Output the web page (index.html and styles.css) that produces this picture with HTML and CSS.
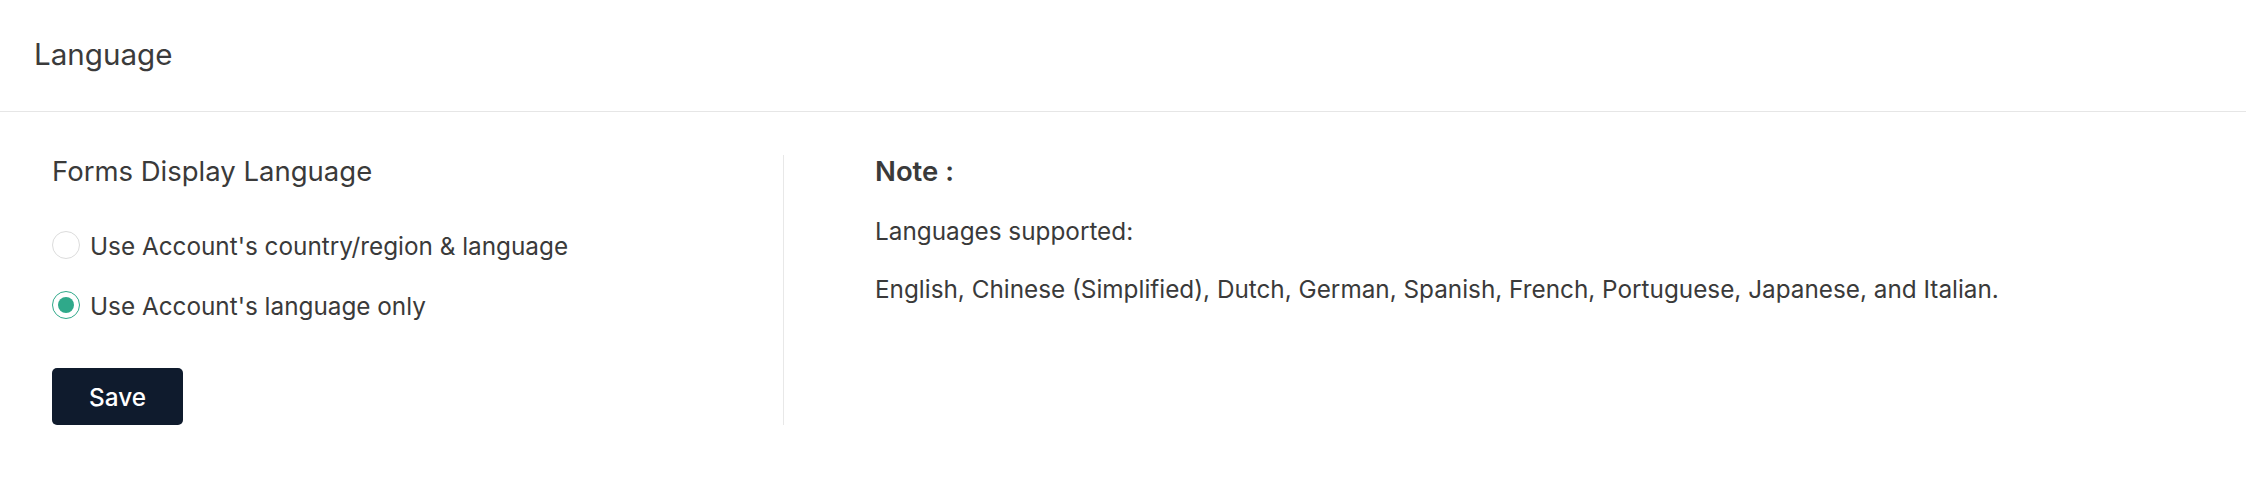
FILE: index.html
```html
<!DOCTYPE html>
<html lang="en">
<head>
<meta charset="utf-8">
<title>Language</title>
<link rel="stylesheet" href="styles.css">
</head>
<body>
<header class="page-header">
  <h1 class="page-title">Language</h1>
</header>
<main class="content">
  <section class="settings">
    <h2 class="section-title">Forms Display Language</h2>
    <div class="radio-group">
      <label class="radio">
        <input type="radio" name="lang" class="radio-input">
        <span class="radio-circle"></span>
        <span class="radio-label">Use Account's country/region &amp; language</span>
      </label>
      <label class="radio">
        <input type="radio" name="lang" class="radio-input" checked>
        <span class="radio-circle"></span>
        <span class="radio-label">Use Account's language only</span>
      </label>
    </div>
    <button class="btn-save" type="button">Save</button>
  </section>
  <aside class="note">
    <h3 class="note-title">Note :</h3>
    <p class="note-text">Languages supported:</p>
    <p class="note-text">English, Chinese (Simplified), Dutch, German, Spanish, French, Portuguese, Japanese, and Italian.</p>
  </aside>
</main>
</body>
</html>
```
FILE: styles.css
```css
* { box-sizing: border-box; }
html, body { margin: 0; padding: 0; background: #ffffff; }
body {
  font-family: Inter, "Noto Sans", "Liberation Sans", sans-serif;
  color: #3a3a3a;
}
.page-header {
  height: 112px;
  border-bottom: 1px solid #e6e6e6;
  display: flex;
  align-items: center;
  padding-left: 34px;
  padding-bottom: 2px;
}
.page-title {
  margin: 0;
  font-size: 29.6px;
  font-weight: 400;
  color: #3b3b3b;
  line-height: 1;
}
.content {
  display: flex;
  padding: 43px 52px 0 52px;
}
.settings {
  width: 732px;
  border-right: 1px solid #e8e8e8;
  display: flex;
  flex-direction: column;
  align-items: flex-start;
}
.section-title {
  margin: 0;
  font-size: 27.5px;
  font-weight: 400;
  line-height: 32px;
  color: #3a3a3a;
}
.radio-group {
  display: flex;
  flex-direction: column;
  gap: 32px;
  margin-top: 44px;
}
.radio {
  display: flex;
  align-items: flex-start;
  gap: 10px;
  height: 28px;
  font-size: 24.3px;
  cursor: pointer;
}
.radio-input { display: none; }
.radio-circle {
  width: 28px;
  height: 28px;
  border-radius: 50%;
  border: 1.5px solid #dcdcdc;
  background: #fff;
  display: flex;
  align-items: center;
  justify-content: center;
  flex: none;
}
.radio-input:checked + .radio-circle { border-color: #2fa98a; }
.radio-input:checked + .radio-circle::after {
  content: "";
  width: 16px;
  height: 16px;
  border-radius: 50%;
  background: #2fa98a;
}
.radio-label {
  line-height: 28px;
  padding-top: 1px;
}
.btn-save {
  margin-top: 49px;
  width: 131px;
  height: 57px;
  border: 0;
  border-radius: 5px;
  background: #0f1b2d;
  color: #ffffff;
  font-family: inherit;
  font-size: 24.3px;
  font-weight: 500;
  cursor: pointer;
}
.note {
  padding-left: 91px;
}
.note-title {
  margin: 0;
  font-size: 27.5px;
  font-weight: 600;
  line-height: 32px;
  color: #3a3a3a;
}
.note-text {
  margin: 30px 0 0 0;
  font-size: 24.3px;
  line-height: 28px;
}
```
